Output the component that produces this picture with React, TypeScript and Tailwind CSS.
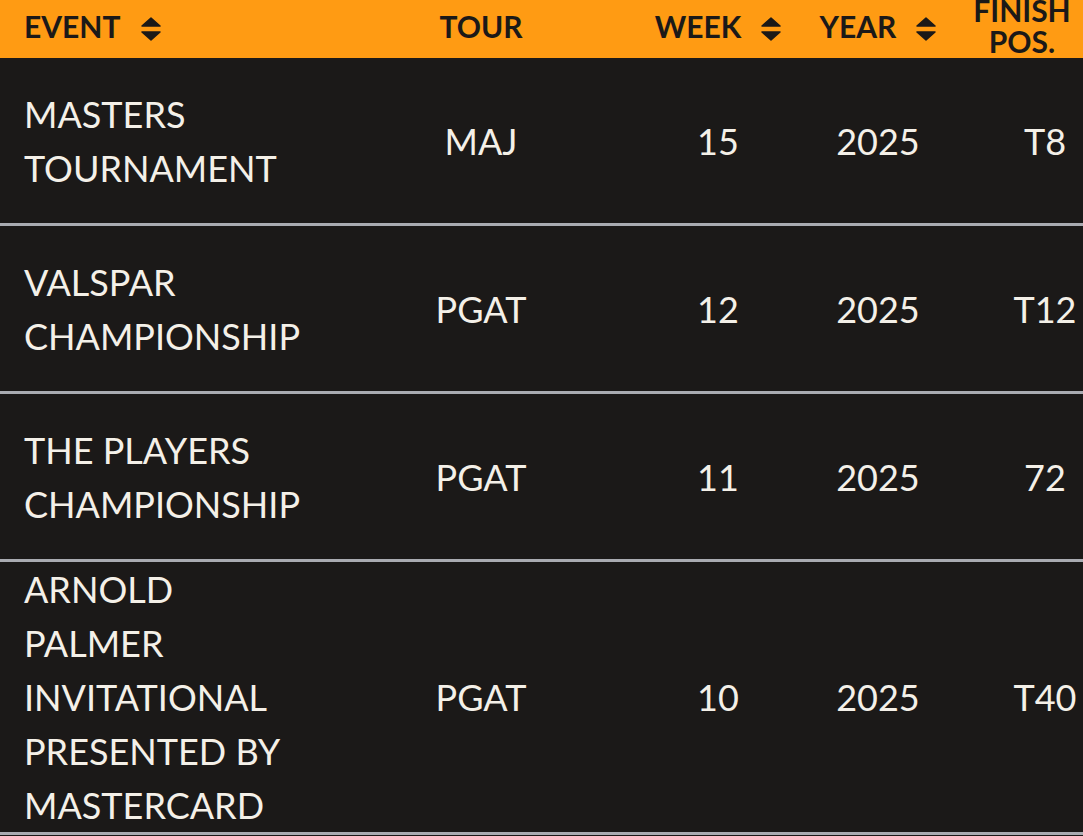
const rows = [
  { event: "MASTERS TOURNAMENT", tour: "MAJ", week: "15", year: "2025", pos: "T8" },
  { event: "VALSPAR CHAMPIONSHIP", tour: "PGAT", week: "12", year: "2025", pos: "T12" },
  { event: "THE PLAYERS CHAMPIONSHIP", tour: "PGAT", week: "11", year: "2025", pos: "72" },
  {
    event: "ARNOLD PALMER INVITATIONAL PRESENTED BY MASTERCARD",
    tour: "PGAT",
    week: "10",
    year: "2025",
    pos: "T40",
  },
];

const SortIcon = () => (
  <svg
    width="20"
    height="24"
    viewBox="0 0 20 24"
    className="mt-[5px] shrink-0"
    fill="#1b1918"
    stroke="#1b1918"
    strokeWidth="1.5"
    strokeLinejoin="round"
  >
    <polygon points="10,1 19,9 1,9" />
    <polygon points="1,15 19,15 10,23" />
  </svg>
);

export default function App() {
  return (
    <div className="h-[836px] w-full overflow-hidden bg-[#1b1918] font-['Lato','Noto_Sans',sans-serif]">
      <div className="w-[1142px]">
        {/* header */}
        <div className="grid h-[58px] grid-cols-[334px_294px_180px_140px_194px] grid-rows-[52px] bg-[#ff9b13] pb-[6px] text-[30px] leading-[31px] font-bold text-[#1b1918]">
          <div className="flex items-center gap-[21px] pl-6">
            <span>EVENT</span>
            <SortIcon />
          </div>
          <div className="flex items-center justify-center">
            <span>TOUR</span>
          </div>
          <div className="flex items-center justify-center gap-[20px] whitespace-nowrap">
            <span>WEEK</span>
            <SortIcon />
          </div>
          <div className="flex items-center justify-center gap-[20px] whitespace-nowrap">
            <span>YEAR</span>
            <SortIcon />
          </div>
          <div className="flex items-center justify-center pr-[46px] text-center">
            <span>
              FINISH
              <br />
              POS.
            </span>
          </div>
        </div>

        {/* rows */}
        {rows.map((r) => (
          <div
            key={r.event}
            className="grid min-h-[168px] grid-cols-[334px_294px_180px_140px_194px] items-center border-b-[3px] border-[#a9abb1] text-[36px] leading-[54px] text-[#f4f0e8]"
          >
            <div className="pl-6 pr-6">{r.event}</div>
            <div className="text-center">{r.tour}</div>
            <div className="text-center">{r.week}</div>
            <div className="text-center">{r.year}</div>
            <div className="text-center">{r.pos}</div>
          </div>
        ))}
      </div>
    </div>
  );
}
